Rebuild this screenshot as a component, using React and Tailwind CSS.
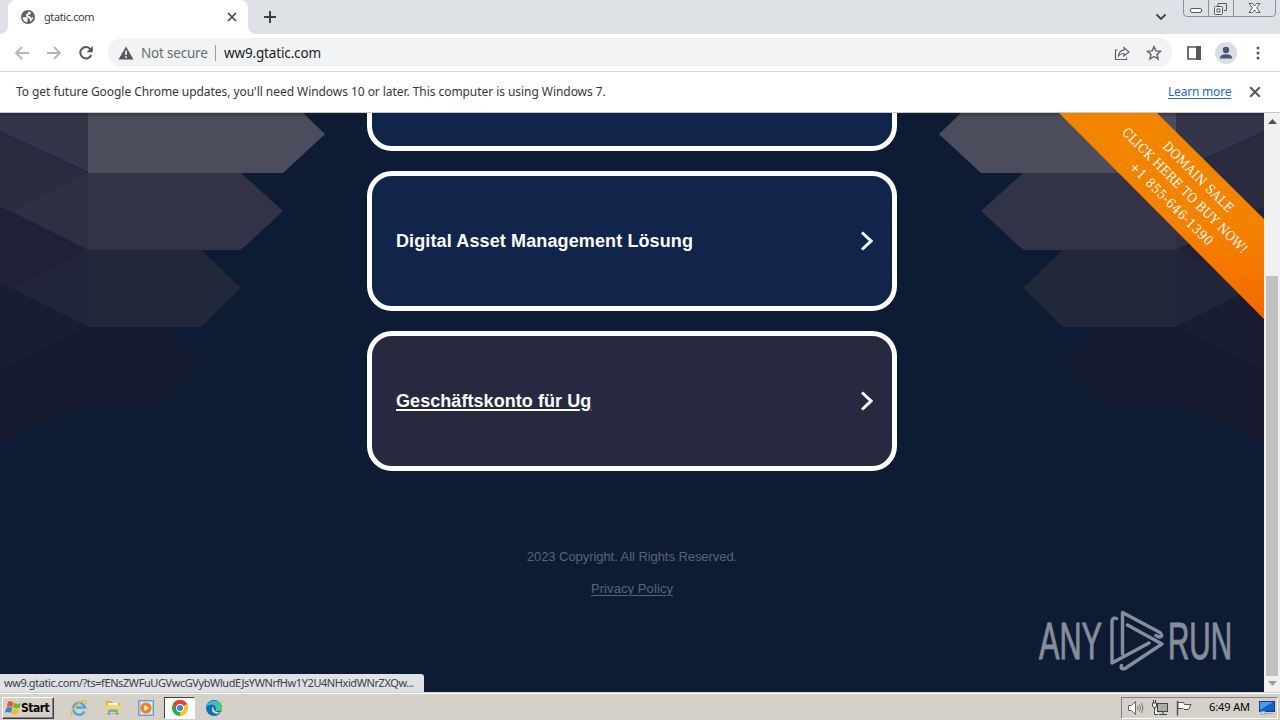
import React from 'react';

const UI = "font-['Noto_Sans','Open_Sans',sans-serif]";

function Globe() {
  return (
    <svg className="h-4 w-4" viewBox="0 0 16 16">
      <circle cx="8" cy="8" r="7" fill="#5f6368" />
      <path d="M2.6 8.2 L6.8 8.3 L7.8 10 L7.2 11 L7.6 13.2 C4.8 13.2 2.7 11 2.6 8.2Z M8.2 2.6 L11 3.5 L10.4 5.2 L8.6 5.700 L7.8 7 L10 7.2 L11.3 9 L13.2 8 C13 10 11.8 12 10 12.8 L10 10.6 L8.6 9.2 L6 7.2 L6.3 5 L8 4.2Z" fill="#fff" />
    </svg>
  );
}

function Cross({ className }) {
  return (
    <svg className={className} viewBox="0 0 10 10">
      <path d="M1 1 L9 9 M9 1 L1 9" stroke="currentColor" strokeWidth="1.7" fill="none" />
    </svg>
  );
}

function TabStrip() {
  return (
    <div className="flex h-[34px] shrink-0 bg-[#dee1e6]">
      <div className="w-2 bg-white">
        <div className="h-full w-full rounded-br-lg bg-[#dee1e6]" />
      </div>
      <div className="flex w-[240px] items-center rounded-t-lg bg-white pl-3 pr-[11px]">
        <Globe />
        <span className="ml-[8px] flex-1 text-[11px] tracking-[-0.4px] text-[#3c4043]">gtatic.com</span>
        <Cross className="h-[10px] w-[10px] text-[#45494d]" />
      </div>
      <div className="w-2 bg-white">
        <div className="h-full w-full rounded-bl-lg bg-[#dee1e6]" />
      </div>
      <svg className="ml-[7px] mt-[10px] h-[14px] w-[14px]" viewBox="0 0 14 14">
        <path d="M7 1V13M1 7H13" stroke="#3c4043" strokeWidth="2" />
      </svg>
      <div className="flex-1" />
      <svg className="mt-[13px] mr-[16px] h-[8px] w-[12px]" viewBox="0 0 12 8">
        <path d="M1.5 1.5L6 6L10.5 1.5" stroke="#3c4043" strokeWidth="1.8" fill="none" />
      </svg>
      <svg className="mr-[3px] h-[18px] w-[94px]" viewBox="0 0 94 18">
        <path d="M.5 0V13Q.5 16.5 4 16.5H89Q92.5 16.5 92.5 13V0M25.5 0V16M50.5 0V16" fill="none" stroke="#8b8f96" />
        <rect x="7.5" y="8.5" width="11" height="4" rx="1.5" fill="#f8f8f8" stroke="#555a61" />
        <path d="M35 3.500H43.500V10.500H41M35 3.500V6" stroke="#555a61" fill="none" />
        <rect x="31.500" y="6.500" width="8" height="8" rx="1" fill="#f8f8f8" stroke="#555a61" />
        <rect x="34" y="9" width="3" height="3" fill="none" stroke="#555a61" />
        <path d="M66 3.500h3.500l2 2.500 2-2.500H77l-3.300 4.300L77 12.500h-3.500l-2-2.500-2 2.500H66l3.300-4.700z" fill="#fff" stroke="#555a61" />
      </svg>
    </div>
  );
}

function Toolbar() {
  return (
    <div className="flex h-[38px] shrink-0 items-center border-b border-[#d5d7da] bg-white">
      <svg className="ml-[14px] h-4 w-4" viewBox="0 0 16 16">
        <path d="M15 8H2M8 2L2 8L8 14" stroke="#b4b6b9" strokeWidth="1.8" fill="none" />
      </svg>
      <svg className="ml-4 h-4 w-4" viewBox="0 0 16 16">
        <path d="M1 8H14M8 2L14 8L8 14" stroke="#b4b6b9" strokeWidth="1.8" fill="none" />
      </svg>
      <svg className="ml-4 h-4 w-4" viewBox="0 0 16 16">
        <path d="M13.200 10A5.700 5.700 0 1 1 12.500 4.300" stroke="#54585d" strokeWidth="2" fill="none" />
        <path d="M14.800 1V7.200H8.600z" fill="#54585d" />
      </svg>
      <div className="ml-[14px] flex h-[29px] w-[1064px] items-center rounded-full bg-[#f1f3f4] pl-[10px] pr-[10px]">
        <svg className="h-[14px] w-4" viewBox="0 0 16 14">
          <path d="M8 .5L15.500 13.500H.5z" fill="#54585d" />
          <path d="M8 4.500V9M8 10.200V12" stroke="#fff" strokeWidth="1.600" />
        </svg>
        <span className="ml-[7px] mt-px w-[67px] whitespace-nowrap text-[13.500px] tracking-[-0.200px] text-[#696d72]">Not secure</span>
        <div className="ml-[7px] h-4 w-px bg-[#9a9da1]" />
        <span className="ml-[8px] mt-px flex-1 text-[13.500px] tracking-[-0.150px] text-[#202124]">ww9.gtatic.com</span>
        <svg className="h-4 w-4" viewBox="0 0 16 16">
          <path d="M3.500 5H1.500V14.500H12.500V12.500" stroke="#5f6368" strokeWidth="1.200" fill="none" />
          <path d="M4.500 11Q5 5.500 10 5.200V2.500L15 7L10 11V8.500Q6.500 8.300 4.500 11Z" stroke="#5f6368" strokeWidth="1.200" fill="none" />
        </svg>
        <svg className="ml-4 h-4 w-4" viewBox="0 0 16 16">
          <path d="M8 1.600L9.900 5.900L14.600 6.300L11 9.400L12.100 14L8 11.500L3.900 14L5 9.400L1.400 6.300L6.100 5.900Z" stroke="#5f6368" strokeWidth="1.400" fill="none" />
        </svg>
      </div>
      <svg className="ml-[15px] h-[14px] w-[14px]" viewBox="0 0 14 14">
        <path d="M1 1H13V13H1z" fill="#fff" stroke="#54585d" strokeWidth="1.700" />
        <path d="M9 0H14V14H9z" fill="#54585d" />
      </svg>
      <svg className="ml-[14px] h-[22px] w-[22px]" viewBox="0 0 22 22">
        <circle cx="11" cy="11" r="11" fill="#d9dde5" />
        <circle cx="11" cy="8" r="3.200" fill="#4a5777" />
        <path d="M5 16.500V15.500Q5.500 12.300 11 12.300T17 15.500V16.500z" fill="#4a5777" />
      </svg>
      <svg className="ml-[19px] h-[14px] w-[4px]" viewBox="0 0 4 14">
        <circle cx="2" cy="2" r="1.500" fill="#54585d" />
        <circle cx="2" cy="7" r="1.500" fill="#54585d" />
        <circle cx="2" cy="12" r="1.500" fill="#54585d" />
      </svg>
    </div>
  );
}

function InfoBar() {
  return (
    <div className="flex h-[41px] shrink-0 items-center border-b border-[#c5c7cb] bg-white pl-4 pr-[19px] text-[12px] text-[#34373b]">
      <span className="flex-1 whitespace-nowrap tracking-[-0.056px]">
        To get future Google Chrome updates, you'll need Windows 10 or later. This computer is using Windows 7.
      </span>
      <a className="w-[63px] whitespace-nowrap tracking-[-0.200px] text-[#2a66c8] underline underline-offset-2">Learn more</a>
      <Cross className="ml-[18px] h-[12px] w-[12px] text-[#54585d]" />
    </div>
  );
}

function HexRows() {
  return (
    <g>
      <path d="M0 0H88V59L0 18z" fill="#313347" />
      <path d="M0 4L88 0V59L0 18z" fill="#333549" />
      <path d="M88 0H303L325 21L283 60H88z" fill="#4b4d5d" />
      <path d="M0 18L88 60V137L0 94z" fill="#292b3f" />
      <path d="M88 60L12 98L88 137z" fill="#2e3043" />
      <path d="M88 60H241L283 98L241 137H88z" fill="#323445" />
      <path d="M0 94L88 137V214L0 172z" fill="#1f2136" />
      <path d="M88 137L12 175L88 214z" fill="#212539" />
      <path d="M88 137H201L241 175L201 214H88z" fill="#222839" />
      <path d="M0 172L88 214V291L0 331z" fill="#15192d" />
      <path d="M0 172L10 175L88 214L0 257z" fill="#191d32" />
      <path d="M88 214H160L203 252L160 291H88z" fill="#151a2e" />
    </g>
  );
}

function Backdrop() {
  return (
    <svg className="absolute inset-0 h-[579px] w-[1264px]" viewBox="0 0 1264 579">
      <defs>
        <linearGradient id="shade" x1="0" y1="0" x2="0" y2="1">
          <stop offset="0" stopColor="#222" stopOpacity="0.45" />
          <stop offset="1" stopColor="#222" stopOpacity="0" />
        </linearGradient>
      </defs>
      <HexRows />
      <g transform="translate(1264 0) scale(-1 1)"><HexRows /></g>
      <rect width="1264" height="4" fill="url(#shade)" />
    </svg>
  );
}

function Ribbon() {
  return (
    <div className="absolute left-[1059px] top-0 h-[206px] w-[205px]">
      <svg className="absolute inset-0 h-[206px] w-[205px]" viewBox="0 0 205 206">
        <defs>
          <linearGradient id="ribbon" x1="0" y1="0" x2="0" y2="1">
            <stop offset="0" stopColor="#f18500" />
            <stop offset="0.550" stopColor="#f48200" />
            <stop offset="1" stopColor="#f66800" />
          </linearGradient>
        </defs>
        <path d="M0 0H98L205 106V206z" fill="url(#ribbon)" />
      </svg>
      <div className="absolute left-[26px] top-[49px] w-[200px] rotate-45 text-center font-['DejaVu_Serif_Condensed','DejaVu_Serif','Liberation_Serif',serif] text-[13px] leading-[19px] text-white">
        <div className="tracking-[0.300px]">DOMAIN SALE</div>
        <div className="whitespace-nowrap tracking-[0.060px]">CLICK HERE TO BUY NOW!</div>
        <div className="tracking-[0.600px]">+1 855-646-1390</div>
      </div>
    </div>
  );
}

function Card({ label, active }) {
  return (
    <a className={'flex h-[140px] w-[530px] shrink-0 items-center rounded-[25px] border-[5px] border-white pl-[24px] pr-[19px] ' + (active ? 'bg-[#26293f]' : 'bg-[#11244a]')}>
      <span className={"flex-1 font-['Liberation_Sans',Arial,sans-serif] text-[18px] font-bold text-white " + (active ? 'tracking-[0.060px] underline decoration-2 underline-offset-2' : 'tracking-[0.120px]')}>
        {label}
      </span>
      <svg className="h-5 w-3" viewBox="0 0 12 20">
        <path d="M1 1.500L10 10L1 18.500" stroke="#fff" strokeWidth="3" fill="none" />
      </svg>
    </a>
  );
}

function Watermark() {
  return (
    <svg className="absolute left-[1034px] top-[495px] h-[70px] w-[214px] opacity-50" viewBox="0 0 214 70">
      <g fill="#fff" stroke="#fff" strokeWidth="0.9" fontFamily="'Liberation Sans Narrow','Liberation Sans',sans-serif" fontSize="52">
        <text x="5" y="50.500" textLength="63" lengthAdjust="spacingAndGlyphs">ANY</text>
        <text x="134" y="50.500" textLength="64" lengthAdjust="spacingAndGlyphs">RUN</text>
      </g>
      <g fill="none" stroke="#fff" strokeWidth="3.400" strokeLinejoin="round" strokeLinecap="round">
        <path d="M82.500 10.500Q78 9 78 14V55L115 35M88.500 46V4.500L126 24.500Q130 28.500 125 29L122 27.500M93.500 17L128 36L91 60.500Q86 62 87.500 57.500" />
      </g>
    </svg>
  );
}

function Page() {
  return (
    <div className="relative h-[579px] w-[1264px] overflow-hidden bg-[#0e1b35]">
      <Backdrop />
      <div className="relative flex h-full flex-col items-center">
        <div className="flex h-[38px] shrink-0 flex-col justify-end overflow-hidden">
          <Card label="" />
        </div>
        <div className="mt-5 flex flex-col gap-5">
          <Card label="Digital Asset Management Lösung" />
          <Card label="Geschäftskonto für Ug" active />
        </div>
        <div className="mt-[78px] flex flex-col items-center gap-4 font-['Liberation_Sans',Arial,sans-serif] text-[13px] leading-4 text-[#5b6377]">
          <span className="tracking-[-0.060px]">2023 Copyright. All Rights Reserved.</span>
          <a className="tracking-[0.090px] underline underline-offset-2">Privacy Policy</a>
        </div>
      </div>
      <Ribbon />
      <Watermark />
      <div className="absolute bottom-0 left-0 flex h-[18px] w-[424px] items-center overflow-hidden whitespace-nowrap rounded-tr-[3px] bg-[#dee1e6] pl-1 text-[11px] tracking-[-0.420px] text-[#3c4043]">
        ww9.gtatic.com/?ts=fENsZWFuUGVwcGVybWludEJsYWNrfHw1Y2U4NHxidWNrZXQw...
      </div>
    </div>
  );
}

function Scrollbar() {
  return (
    <div className="flex h-[579px] w-4 flex-col items-center bg-[#f1f1f1]">
      <svg className="mt-[6px] h-[5px] w-[9px]" viewBox="0 0 9 5"><path d="M4.500 0L9 5H0z" fill="#505050" /></svg>
      <div className="mt-[152px] h-[400px] w-3 bg-[#c1c1c1]" />
      <svg className="mt-[5px] h-[5px] w-[9px]" viewBox="0 0 9 5"><path d="M4.500 5L9 0H0z" fill="#a0a0a0" /></svg>
    </div>
  );
}

function Taskbar() {
  return (
    <div className="flex h-7 shrink-0 items-center border-t border-[#d5d0c8] bg-[#d5d0c8] shadow-[inset_0_1px_0_#fff]">
      <div className="ml-[2px] mt-[2px] flex h-[22px] w-[52px] items-center border border-b-[#404040] border-l-white border-r-[#404040] border-t-white pl-[2px] shadow-[inset_-1px_-1px_0_#808080]">
        <svg className="h-4 w-4 shrink-0" viewBox="0 0 16 16">
          <path d="M3 1.500Q6 .5 8.300 2.500L7.300 7.300Q5 5.500 1.800 6.800z" fill="#e7562b" />
          <path d="M9 2.800Q12 5 16 3L14.500 7.800Q11 9.500 8 7.500z" fill="#77b62c" />
          <path d="M1.600 7.500Q5 6.300 7.100 8L6 13Q3.500 11.200 0 12.500z" fill="#3a7fd0" />
          <path d="M7.800 8.400Q11 10.300 14.300 8.800L13 13.500Q9.500 15.500 6.700 13.400z" fill="#f3bd23" />
        </svg>
        <span className="text-[12px] font-bold tracking-[-0.500px] text-black font-['DejaVu_Sans_Condensed','DejaVu_Sans',sans-serif]">Start</span>
      </div>
      <svg className="ml-[16px] mt-[2px] h-[18px] w-[18px]" viewBox="0 0 18 18">
        <path d="M14.500 12.500A6 6 0 1 1 15 8.500H6" fill="none" stroke="#4aa9e0" strokeWidth="2.600" />
        <path d="M2 16.500C-1 13 9 1 15.500 1.500Q17 2 15.500 5" fill="none" stroke="#e7b92e" strokeWidth="1.300" />
      </svg>
      <svg className="ml-[16px] mt-[2px] h-4 w-[18px]" viewBox="0 0 18 16">
        <path d="M2 1H8L9 3H16V14H2z" fill="#d9b04a" />
        <path d="M4 3H14V9H4z" fill="#fff8d8" />
        <path d="M1 5H17L16 13H2z" fill="#f1d676" />
        <path d="M4 15V10.500Q4 9.500 5 9.500H13Q14 9.500 14 10.500V15H12V12H6V15z" fill="#68add6" />
      </svg>
      <svg className="ml-4 mt-[2px] h-4 w-4" viewBox="0 0 16 16">
        <rect x=".5" y=".5" width="15" height="15" fill="#a9c9e2" stroke="#6d9dc4" />
        <rect x="3" y="2" width="11" height="12" fill="#dbeaf5" />
        <circle cx="8" cy="8" r="5.500" fill="#ee8218" />
        <path d="M6.500 5V11L11 8z" fill="#fff" />
      </svg>
      <div className="ml-[10px] mt-[2px] flex h-[22px] w-[31px] items-center justify-center border border-b-white border-l-[#404040] border-r-white border-t-[#404040] bg-white">
        <svg className="h-4 w-4" viewBox="0 0 16 16">
          <path d="M8 8L1.070 4A8 8 0 0 1 14.930 4z" fill="#e24134" />
          <path d="M8 8L14.930 4A8 8 0 0 1 8 16z" fill="#fbc116" />
          <path d="M8 8L8 16A8 8 0 0 1 1.070 4z" fill="#2da94f" />
          <path d="M8 4.500H15.200L14.930 4A8 8 0 0 0 1.070 4L4.900 10z" fill="#e24134" />
          <circle cx="8" cy="8" r="3.900" fill="#fff" />
          <circle cx="8" cy="8" r="3" fill="#3f7fe8" />
        </svg>
      </div>
      <svg className="ml-[11px] mt-[2px] h-4 w-4" viewBox="0 0 16 16">
        <circle cx="8" cy="8" r="8" fill="#176bb8" />
        <path d="M.2 7A8 8 0 0 1 16 8Q16 11 12 11Q9 11 10 9Q10 5 6 4.500Q2 4.500 .2 7z" fill="#35bed0" />
        <path d="M10 .5A8 8 0 0 1 16 8Q16 11 12 11Q9 11 10 9Q13 5 10 .5z" fill="#54c878" />
        <path d="M6.500 7Q4.500 12 9.500 13.500Q12.500 14 14.500 12.500Q13 12.500 11 12Q6.500 10.500 7.500 7z" fill="#d5e6ef" />
      </svg>
      <div className="flex-1" />
      <div className="mr-[2px] mt-[2px] flex h-[22px] w-[157px] items-center border border-b-white border-l-[#808080] border-r-white border-t-[#808080] pl-[6px]">
        <svg className="h-4 w-4" viewBox="0 0 16 16">
          <path d="M.5 5.500H3.500L7.500 1.500V14.500L3.500 10.500H.5z" fill="#fff" stroke="#666" />
          <path d="M9.500 6Q10.800 8 9.500 10M11.500 4.500Q13.500 8 11.500 11.500M13.500 3Q16.500 8 13.500 13" fill="none" stroke="#777" />
        </svg>
        <svg className="ml-2 h-4 w-4" viewBox="0 0 16 16">
          <rect x="5.500" y="3.500" width="10" height="8" fill="#aaa" stroke="#444" />
          <path d="M7 14.500H15M11 12V14" stroke="#444" />
          <path d="M.5 3V6Q.5 7.500 2.500 7.500T4.500 6V3zM1.500 0V3M3.500 0V3M2.500 7.500V14.500H6" fill="#fff" stroke="#444" />
        </svg>
        <svg className="ml-2 h-4 w-4" viewBox="0 0 16 16">
          <path d="M1.500 1V15.500" stroke="#555" strokeWidth="1.500" />
          <path d="M2 2.500H7.500L8.500 4.500H15L12.500 9.500H8L7 8.500H2z" fill="#fff" stroke="#555" />
        </svg>
        <span className="ml-[17px] w-[41px] whitespace-nowrap text-[11px] tracking-[-0.100px] text-black">6:49 AM</span>
        <svg className="ml-[9px] h-[14px] w-4" viewBox="0 0 16 14">
          <rect x=".5" y=".5" width="15" height="10" fill="#1763c4" stroke="#173d80" />
          <path d="M1 1H14L1 9z" fill="#4b9aec" />
          <path d="M2 10.500H6V13.500H2zM6 12.500H14" stroke="#8da9c7" fill="#c4d8ec" />
        </svg>
      </div>
    </div>
  );
}

export default function App() {
  return (
    <div className={'flex h-[720px] w-[1280px] flex-col overflow-hidden ' + UI}>
      <TabStrip />
      <Toolbar />
      <InfoBar />
      <div className="flex h-[579px] shrink-0">
        <Page />
        <Scrollbar />
      </div>
      <Taskbar />
    </div>
  );
}
